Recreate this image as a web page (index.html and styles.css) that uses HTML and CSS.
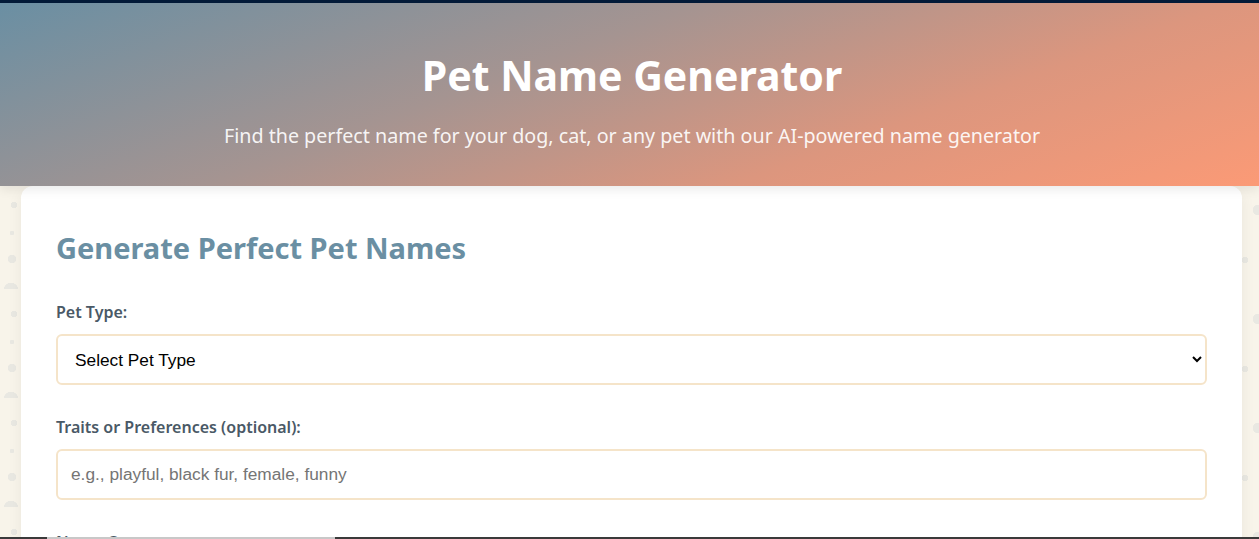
FILE: index.html
```html
<!DOCTYPE html>
<html lang="en">
<head>
  <meta charset="UTF-8">
  <meta name="viewport" content="width=device-width, initial-scale=1.0">
  <title>Pet Name Generator</title>
  <link rel="stylesheet" href="styles.css">
</head>
<body>
  <header class="hero">
    <h1>Pet Name Generator</h1>
    <p>Find the perfect name for your dog, cat, or any pet with our AI-powered name generator</p>
  </header>

  <main class="page">
    <section class="card">
      <h2>Generate Perfect Pet Names</h2>

      <div class="field">
        <label for="petType">Pet Type:</label>
        <select id="petType">
          <option>Select Pet Type</option>
          <option>Dog</option>
          <option>Cat</option>
          <option>Bird</option>
          <option>Rabbit</option>
        </select>
      </div>

      <div class="field">
        <label for="traits">Traits or Preferences (optional):</label>
        <input type="text" id="traits" placeholder="e.g., playful, black fur, female, funny">
      </div>

      <div class="field">
        <label for="category">Name Category:</label>
      </div>
    </section>
  </main>

  <div class="scroll-strip"><span></span></div>
</body>
</html>
```

FILE: styles.css
```css
body {
  margin: 0;
  padding: 0;
  font-family: "Noto Sans", "Open Sans", sans-serif;
  background-color: #f8f4ea;
  background-image:
    radial-gradient(circle at 14px 25px, #e9e8e2 3px, transparent 3.5px),
    radial-gradient(circle at 12px 53px, #e9e8e2 2px, transparent 2.5px),
    radial-gradient(circle at 12px 79px, #e9e8e2 4px, transparent 4.5px),
    radial-gradient(circle at 11px 110px, #e9e8e2 7px, transparent 7.5px),
    radial-gradient(circle at 1258px 30px, #e9e8e2 5px, transparent 5.5px),
    radial-gradient(circle at 1245px 80px, #e9e8e2 3px, transparent 3.5px);
  background-size: 1259px 109px;
  background-position: 0 180px;
  overflow: hidden;
}

.hero {
  position: relative;
  z-index: 2;
  border-top: 3px solid #021a38;
  height: 186px;
  box-sizing: border-box;
  padding: 48px 20px 0 25px;
  text-align: center;
  color: #ffffff;
  background: linear-gradient(160deg, #6a8fa3 0%, #a59491 40%, #dc967e 70%, #fb9a76 100%);
  box-shadow: 0 4px 10px rgba(0, 0, 0, 0.08);
}

.hero h1 {
  margin: 0;
  font-size: 41px;
  font-weight: 700;
  line-height: 48px;
}

.hero p {
  margin: 24px 0 0;
  font-size: 19.7px;
  line-height: 26px;
  color: rgba(255, 255, 255, 0.92);
}

.page {
  padding: 0 17px 0 21px;
}

.card {
  background: #ffffff;
  border-radius: 12px;
  padding: 42px 35px 30px;
  box-shadow: 0 5px 15px rgba(0, 0, 0, 0.06);
}

.card h2 {
  margin: 0 0 33px;
  font-size: 29px;
  font-weight: 700;
  line-height: 40px;
  color: #6a8fa3;
}

.field {
  margin-bottom: 31px;
}

.field label {
  display: block;
  margin-bottom: 11px;
  font-size: 16px;
  font-weight: 600;
  line-height: 22px;
  color: #4a5966;
}

.field select,
.field input[type="text"] {
  display: block;
  width: 100%;
  height: 51px;
  box-sizing: border-box;
  margin: 0;
  padding: 0 13px;
  border: 2px solid #f5e4c9;
  border-radius: 6px;
  background: #ffffff;
  font-family: Arial, "Liberation Sans", sans-serif;
  font-size: 17.3px;
  color: #000000;
}

.field input::placeholder {
  color: #757575;
}

.scroll-strip {
  position: fixed;
  left: 0;
  right: 0;
  bottom: 0;
  height: 2px;
  background: #3a3a3a;
}

.scroll-strip span {
  display: block;
  margin-left: 47px;
  width: 288px;
  height: 2px;
  background: #c8c8c8;
}
```
